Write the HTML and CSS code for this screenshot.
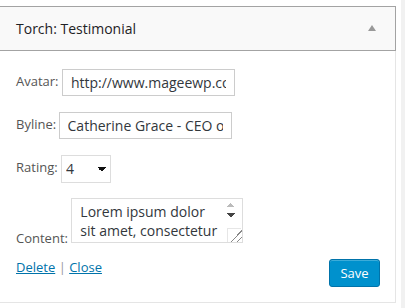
FILE: index.html
```html
<!DOCTYPE html>
<html lang="en">
<head>
    <meta charset="UTF-8">
    <meta name="viewport" content="width=device-width, initial-scale=1.0">
    <title>Torch: Testimonial</title>
    <link rel="stylesheet" href="styles.css">
</head>
<body>
    <div class="page">
        <div class="widget">
            <div class="widget-top">
                <h3>Torch: Testimonial</h3>
                <span class="toggle"></span>
            </div>
            <div class="widget-inside">
                <p><label>Avatar: <input type="text" class="field" value="http://www.mageewp.com/wp-content/avatar.jpg"></label></p>
                <p class="byline"><label>Byline: <input type="text" class="field" value="Catherine Grace - CEO of Company"></label></p>
                <p><label>Rating: <select class="rating"><option>1</option><option>2</option><option>3</option><option selected>4</option><option>5</option></select></label></p>
                <p class="content"><label>Content: <textarea rows="2">Lorem ipsum dolor sit amet, consectetur adipiscing elit, sed do eiusmod tempor.</textarea></label></p>
                <div class="widget-control">
                    <div class="links">
                        <a href="#">Delete</a> | <a href="#">Close</a>
                    </div>
                    <button class="save">Save</button>
                </div>
            </div>
        </div>
        <div class="edge"></div>
    </div>
</body>
</html>
```

FILE: styles.css
```css
body {
    font-family: 'Open Sans', sans-serif;
    font-size: 13px;
    margin: 0;
    padding: 0;
    background-color: #fff;
    color: #555;
}

.page {
    display: flex;
    align-items: flex-start;
}

.widget {
    width: 398px;
    margin: 6px 0 0 -2px;
    flex-shrink: 0;
}

.widget-top {
    display: flex;
    align-items: center;
    justify-content: space-between;
    height: 43px;
    background-color: #f9f9f9;
    border: 1px solid #a3a3a3;
    padding: 0 19px 0 17px;
}

.widget-top h3 {
    margin: 0;
    font-size: 14px;
    font-weight: 400;
    color: #1e2226;
}

.toggle {
    width: 0;
    height: 0;
    border-left: 4px solid transparent;
    border-right: 4px solid transparent;
    border-bottom: 6px solid #999;
    margin-bottom: 2px;
}

.widget-inside {
    border: 1px solid #e5e5e5;
    border-top: none;
    padding: 2px 15px 15px 17px;
    height: 234px;
}

.widget-inside p {
    margin: 15px 0 0;
    line-height: 27px;
}

.field {
    font-family: 'Open Sans', sans-serif;
    font-size: 14px;
    color: #32373c;
    width: 173px;
    height: 27px;
    box-sizing: border-box;
    border: 1px solid #ccc;
    padding: 0 8px;
    margin: 0;
    vertical-align: middle;
    outline: none;
}

.byline .field {
    margin-left: -1px;
}

.rating {
    font-family: 'Open Sans', sans-serif;
    font-size: 14px;
    color: #32373c;
    width: 50px;
    height: 28px;
    border: 1px solid #ddd;
    background: #fff;
    padding: 0 4px;
    vertical-align: middle;
    appearance: none;
    background-image: linear-gradient(45deg, transparent 50%, #111 50%), linear-gradient(-45deg, transparent 50%, #111 50%);
    background-size: 4px 6px, 4px 6px;
    background-position: 36px 11px, 40px 11px;
    background-repeat: no-repeat;
    border-radius: 0;
}

.content {
    line-height: 18px;
}

/* scrollbar arrows drawn as background, the real bar is hidden */
.content textarea {
    font-family: 'Open Sans', sans-serif;
    font-size: 14px;
    line-height: 19px;
    color: #32373c;
    width: 172px;
    height: 45px;
    box-sizing: border-box;
    border: 1px solid #ddd;
    padding: 3px 24px 0 8px;
    margin: 0;
    resize: both;
    overflow: hidden;
    vertical-align: baseline;
    outline: none;
    background-color: #fff;
    background-image:
        linear-gradient(135deg, transparent 50%, #bbb 50%),
        linear-gradient(-135deg, transparent 50%, #bbb 50%),
        linear-gradient(45deg, transparent 50%, #444 50%),
        linear-gradient(-45deg, transparent 50%, #444 50%),
        linear-gradient(#e6e6e6, #e6e6e6),
        linear-gradient(#e6e6e6, #e6e6e6);
    background-size: 4px 4px, 4px 4px, 4px 4px, 4px 4px, 1px 14px, 14px 1px;
    background-position: 155px 4px, 159px 4px, 155px 14px, 159px 14px, 155px 29px, 155px 29px;
    background-repeat: no-repeat;
}

.content textarea::-webkit-resizer {
    background-color: transparent;
    background-image: linear-gradient(135deg, transparent 60%, #888 60%, #888 66%, transparent 66%, transparent 80%, #888 80%, #888 86%, transparent 86%);
}

.widget-control {
    display: flex;
    justify-content: space-between;
    align-items: center;
    margin-top: 7px;
}

.links {
    color: #999;
    margin-top: -12px;
}

.links a {
    color: #0073aa;
}

.save {
    font-family: 'Open Sans', sans-serif;
    font-size: 13px;
    color: #fff;
    background-color: #0091cd;
    border: 1px solid #0073aa;
    border-radius: 3px;
    width: 51px;
    height: 28px;
    padding: 0;
    margin-right: 0;
    box-shadow: inset 0 1px 0 rgba(120, 200, 230, 0.5);
}

.edge {
    width: 4px;
    height: 308px;
    margin-left: 5px;
    background-color: #f1f1f1;
}
```
